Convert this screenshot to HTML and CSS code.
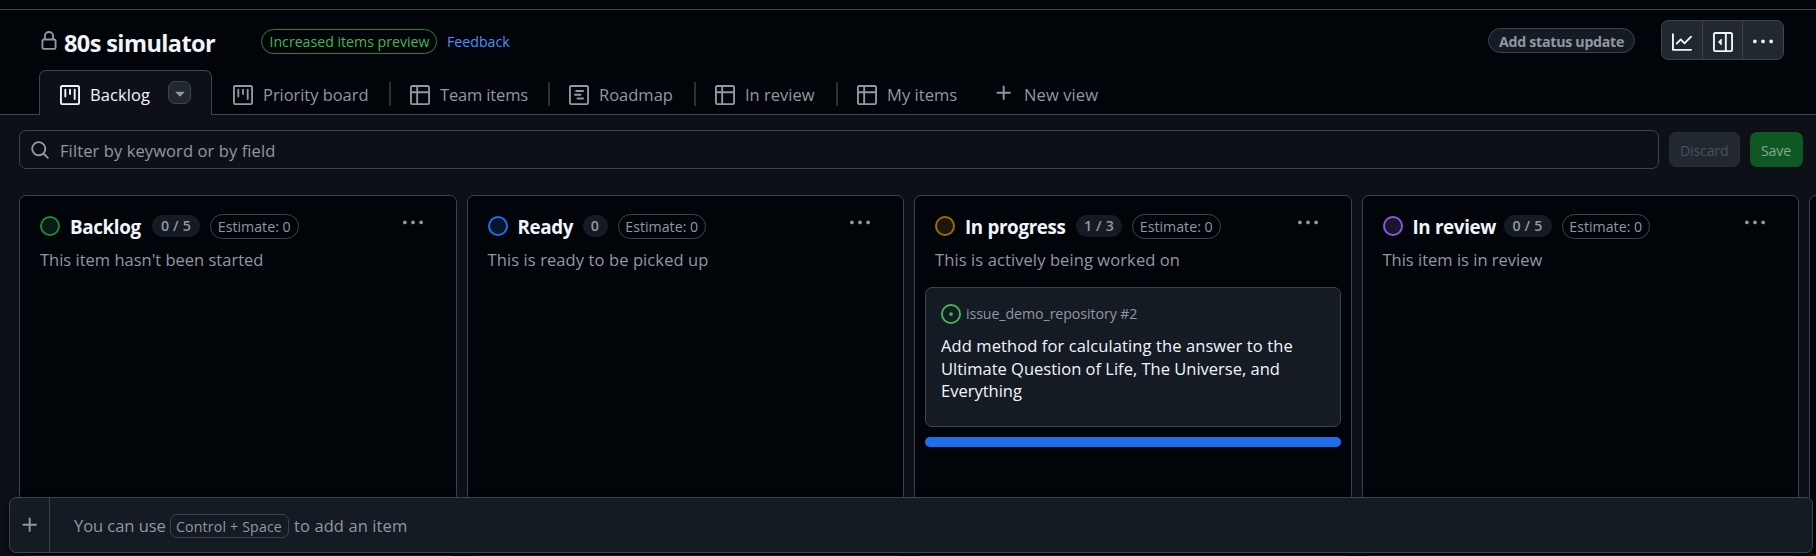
FILE: index.html
```html
<!DOCTYPE html>
<html lang="en">
<head>
<meta charset="utf-8">
<title>80s simulator</title>
<link rel="stylesheet" href="styles.css">
</head>
<body>
<svg class="defs" aria-hidden="true">
  <symbol id="board" viewBox="0 0 16 16"><path d="M1.75 0h12.5C15.216 0 16 .784 16 1.75v12.5A1.75 1.75 0 0 1 14.25 16H1.75A1.75 1.75 0 0 1 0 14.25V1.75C0 .784.784 0 1.75 0ZM1.5 1.75v12.5c0 .138.112.25.25.25h12.5a.25.25 0 0 0 .25-.25V1.75a.25.25 0 0 0-.25-.25H1.75a.25.25 0 0 0-.25.25ZM11.75 3a.75.75 0 0 1 .75.75v7.5a.75.75 0 0 1-1.5 0v-7.5a.75.75 0 0 1 .75-.75Zm-8.25.75a.75.75 0 0 1 1.5 0v5.5a.75.75 0 0 1-1.5 0ZM8 3a.75.75 0 0 1 .75.75v3.5a.75.75 0 0 1-1.5 0v-3.5A.75.75 0 0 1 8 3Z"/></symbol>
  <symbol id="table" viewBox="0 0 16 16"><path d="M0 1.75C0 .784.784 0 1.75 0h12.5C15.216 0 16 .784 16 1.75v12.5A1.75 1.75 0 0 1 14.25 16H1.75A1.75 1.75 0 0 1 0 14.25ZM6.5 6.5v8h7.75a.25.25 0 0 0 .25-.25V6.5Zm8-1.5V1.75a.25.25 0 0 0-.25-.25H6.5V5Zm-13 1.5v7.75c0 .138.112.25.25.25H5v-8ZM5 5V1.5H1.75a.25.25 0 0 0-.25.25V5Z"/></symbol>
  <symbol id="roadmap" viewBox="0 0 16 16"><path d="M4.75 7a.75.75 0 0 0 0 1.5h4.5a.75.75 0 0 0 0-1.5h-4.5ZM5 4.75A.75.75 0 0 1 5.75 4h5.5a.75.75 0 0 1 0 1.5h-5.5A.75.75 0 0 1 5 4.75ZM6.75 10a.75.75 0 0 0 0 1.5h4.5a.75.75 0 0 0 0-1.5h-4.5Z"/><path d="M0 1.75C0 .784.784 0 1.75 0h12.5C15.216 0 16 .784 16 1.75v12.5A1.75 1.75 0 0 1 14.25 16H1.75A1.75 1.75 0 0 1 0 14.25Zm1.75-.25a.25.25 0 0 0-.25.25v12.5c0 .138.112.25.25.25h12.5a.25.25 0 0 0 .25-.25V1.75a.25.25 0 0 0-.25-.25Z"/></symbol>
  <symbol id="plus" viewBox="0 0 16 16"><path d="M7.75 2a.75.75 0 0 1 .75.75V7h4.25a.75.75 0 0 1 0 1.5H8.5v4.25a.75.75 0 0 1-1.5 0V8.5H2.75a.75.75 0 0 1 0-1.5H7V2.75A.75.75 0 0 1 7.75 2Z"/></symbol>
  <symbol id="dots" viewBox="0 0 16 16"><path d="M8 9a1.5 1.5 0 1 0 0-3 1.5 1.5 0 0 0 0 3ZM1.5 9a1.5 1.5 0 1 0 0-3 1.5 1.5 0 0 0 0 3Zm13 0a1.5 1.5 0 1 0 0-3 1.5 1.5 0 0 0 0 3Z"/></symbol>
  <symbol id="lock" viewBox="0 0 16 16"><path d="M4 4a4 4 0 0 1 8 0v2h.25c.966 0 1.75.784 1.75 1.75v5.5A1.75 1.75 0 0 1 12.25 15h-8.5A1.75 1.75 0 0 1 2 13.25v-5.5C2 6.784 2.784 6 3.75 6H4Zm8.25 3.5h-8.5a.25.25 0 0 0-.25.25v5.5c0 .138.112.25.25.25h8.5a.25.25 0 0 0 .25-.25v-5.5a.25.25 0 0 0-.25-.25ZM10.5 6V4a2.5 2.5 0 1 0-5 0v2Z"/></symbol>
  <symbol id="search" viewBox="0 0 16 16"><path d="M10.68 11.74a6 6 0 0 1-7.922-8.982 6 6 0 0 1 8.982 7.922l3.04 3.04a.749.749 0 1 1-1.06 1.06ZM11.5 7a4.499 4.499 0 1 0-8.997 0A4.499 4.499 0 0 0 11.5 7Z"/></symbol>
  <symbol id="graph" viewBox="0 0 16 16"><path d="M1.5 1.75V13.5h13.75a.75.75 0 0 1 0 1.5H.75a.75.75 0 0 1-.75-.75V1.75a.75.75 0 0 1 1.5 0Zm14.28 2.53-5.25 5.25a.75.75 0 0 1-1.06 0L7 7.06 4.28 9.78a.751.751 0 0 1-1.06-1.06l3.25-3.25a.75.75 0 0 1 1.06 0L10 7.94l4.72-4.72a.751.751 0 0 1 1.06 1.06Z"/></symbol>
  <symbol id="sidebar" viewBox="0 0 16 16"><path d="m4.177 7.823 2.396-2.396A.25.25 0 0 1 7 5.604v4.792a.25.25 0 0 1-.427.177L4.177 8.177a.25.25 0 0 1 0-.354Z"/><path d="M0 1.75C0 .784.784 0 1.75 0h12.5C15.216 0 16 .784 16 1.75v12.5A1.75 1.75 0 0 1 14.25 16H1.75A1.75 1.75 0 0 1 0 14.25Zm1.75-.25a.25.25 0 0 0-.25.25v12.5c0 .138.112.25.25.25H9.5v-13Zm12.5 13a.25.25 0 0 0 .25-.25V1.75a.25.25 0 0 0-.25-.25H11v13Z"/></symbol>
  <symbol id="issue" viewBox="0 0 16 16"><path d="M8 9.5a1.5 1.5 0 1 0 0-3 1.5 1.5 0 0 0 0 3Z"/><path d="M8 0a8 8 0 1 1 0 16A8 8 0 0 1 8 0ZM1.5 8a6.5 6.5 0 1 0 13 0 6.5 6.5 0 0 0-13 0Z"/></symbol>
  <symbol id="caret" viewBox="0 0 16 16"><path d="m4.427 7.427 3.396 3.396a.25.25 0 0 0 .354 0l3.396-3.396A.25.25 0 0 0 11.396 7H4.604a.25.25 0 0 0-.177.427Z"/></symbol>
</svg>

<header class="header">
  <svg class="icon lock"><use href="#lock"/></svg>
  <h1 class="title">80s simulator</h1>
  <span class="preview">Increased items preview</span>
  <a class="feedback">Feedback</a>
  <span class="status">Add status update</span>
  <div class="actions">
    <span class="action"><svg class="icon"><use href="#graph"/></svg></span>
    <span class="action"><svg class="icon"><use href="#sidebar"/></svg></span>
    <span class="action"><svg class="icon"><use href="#dots"/></svg></span>
  </div>
</header>

<nav class="tabs">
  <div class="tab active"><svg class="icon"><use href="#board"/></svg><span class="t-backlog">Backlog</span><span class="drop"><svg class="icon"><use href="#caret"/></svg></span></div>
  <div class="tab"><svg class="icon"><use href="#board"/></svg><span class="t-priority">Priority board</span></div>
  <div class="tab split"><svg class="icon"><use href="#table"/></svg><span class="t-team">Team items</span></div>
  <div class="tab split"><svg class="icon"><use href="#roadmap"/></svg><span class="t-roadmap">Roadmap</span></div>
  <div class="tab split"><svg class="icon"><use href="#table"/></svg><span class="t-inreview">In review</span></div>
  <div class="tab split"><svg class="icon"><use href="#table"/></svg><span class="t-my">My items</span></div>
  <div class="tab new"><svg class="icon"><use href="#plus"/></svg><span class="t-new">New view</span></div>
</nav>

<div class="filter">
  <div class="field"><svg class="icon search"><use href="#search"/></svg><span class="t-filter">Filter by keyword or by field</span></div>
  <span class="btn discard">Discard</span>
  <span class="btn save">Save</span>
</div>

<main class="board">
  <section class="column">
    <div class="head"><span class="dot green"></span><h2 class="name n-backlog">Backlog</h2><span class="count c5">0 / 5</span><span class="estimate">Estimate: 0</span><svg class="icon more"><use href="#dots"/></svg></div>
    <p class="desc">This item hasn't been started</p>
  </section>
  <section class="column">
    <div class="head"><span class="dot blue"></span><h2 class="name n-ready">Ready</h2><span class="count c0">0</span><span class="estimate">Estimate: 0</span><svg class="icon more"><use href="#dots"/></svg></div>
    <p class="desc wide">This is ready to be picked up</p>
  </section>
  <section class="column">
    <div class="head"><span class="dot amber"></span><h2 class="name n-progress">In progress</h2><span class="count c3">1 / 3</span><span class="estimate">Estimate: 0</span><svg class="icon more"><use href="#dots"/></svg></div>
    <p class="desc wide">This is actively being worked on</p>
    <article class="card">
      <div class="repo"><svg class="icon"><use href="#issue"/></svg><span class="t-repo">issue_demo_repository #2</span></div>
      <p class="card-title"><span class="wide">Add method for calculating the answer to the</span><br>Ultimate Question of Life, The Universe, and<br>Everything</p>
    </article>
    <div class="drop-bar"></div>
  </section>
  <section class="column">
    <div class="head"><span class="dot purple"></span><h2 class="name n-review">In review</h2><span class="count c5">0 / 5</span><span class="estimate">Estimate: 0</span><svg class="icon more"><use href="#dots"/></svg></div>
    <p class="desc">This item is in review</p>
  </section>
  <section class="column"></section>
</main>

<footer class="omnibar">
  <span class="add"><svg class="icon"><use href="#plus"/></svg></span>
  <span class="hint"><span class="t-you">You can use</span><kbd class="key">Control + Space</kbd><span class="t-to">to add an item</span></span>
</footer>
</body>
</html>
```
FILE: styles.css
```css
* { box-sizing: border-box; }
body {
  margin: 0;
  width: 1816px;
  height: 556px;
  overflow: hidden;
  position: relative;
  display: flex;
  flex-direction: column;
  background: #0d1117;
  color: #9198a1;
  font: 16.5px/24px "Open Sans", "Noto Sans", sans-serif;
  white-space: nowrap;
}
h1, h2, p { margin: 0; }
.defs { display: none; }
.icon { width: 20px; height: 20px; fill: currentColor; flex: none; display: block; }

.header {
  height: 70px;
  flex: none;
  display: flex;
  align-items: flex-start;
  background: #010409;
  padding-left: 39px;
  box-shadow: inset 0 9px #010409, inset 0 10px #3d444d;
}
.lock { margin: 31px 5px 0 0; }
.title { width: 197px; margin-top: 27px; font-size: 23.5px; line-height: 32px; font-weight: 700; letter-spacing: -0.6px; color: #f0f6fc; }
.preview { width: 176px; height: 25px; margin-top: 29px; border: 1px solid #238636; border-radius: 13px; color: #3fb950; font-size: 14.2px; line-height: 24px; padding-left: 7.5px; letter-spacing: -0.02px; }
.feedback { margin: 30px 0 0 10px; color: #4493f8; font-size: 14.2px; line-height: 24px; }
.status { width: 147px; height: 25px; margin: 28px 26px 0 auto; border: 1px solid #3d444d; border-radius: 13px; background: #151b23; font-size: 14.2px; font-weight: 700; letter-spacing: -0.28px; line-height: 25px; padding-left: 10px; }
.actions { display: flex; width: 123px; height: 40px; margin: 20px 32px 0 0; border: 1px solid #3d444d; border-radius: 7px; background: #212830; color: #f0f6fc; overflow: hidden; }
.action { flex: 1; display: flex; align-items: center; justify-content: center; padding-top: 4px; }
.action + .action { border-left: 1px solid #3d444d; }

.tabs { height: 45px; flex: none; display: flex; background: #010409; padding-left: 39px; box-shadow: inset 0 -1px #3d444d; }
.tab { display: flex; align-items: center; padding: 4px 0 0 21px; gap: 10px; }
.active { width: 173px; padding: 4px 0 0 20px; border: 1px solid #3d444d; border-bottom: 0; border-radius: 7px 7px 0 0; background: #0d1117; color: #f0f6fc; }
.drop { width: 23px; height: 23px; display: flex; align-items: center; justify-content: center; margin: -5px 20px 0 auto; border: 1px solid #3d444d; border-radius: 7px; background: #212830; color: #9198a1; }
.tab span { flex: none; }
.split::before { content: ""; width: 2px; height: 24px; background: #2a3038; margin: -2px 9px 0 -21px; }
.new .icon { margin-top: -4px; }
.t-backlog { width: 66px; letter-spacing: 0.1px; }
.t-priority { width: 126px; letter-spacing: -0.05px; }
.t-team { width: 108px; letter-spacing: -0.15px; }
.t-roadmap { width: 95px; }
.t-inreview { width: 91px; }
.t-my { width: 86px; letter-spacing: 0.05px; }
.t-new { letter-spacing: 0.1px; }

.filter { display: flex; align-items: center; height: 69px; flex: none; padding: 0 13px 0 19px; margin-bottom: 11px; }
.field { display: flex; align-items: center; width: 1640px; height: 39px; border: 1px solid #3d444d; border-radius: 7px; padding-left: 10px; gap: 10px; margin-right: 10px; }
.t-filter { padding-top: 2px; letter-spacing: 0.1px; }
.btn { height: 35px; border-radius: 7px; font-size: 14.2px; line-height: 37px; padding-left: 12px; letter-spacing: -0.2px; }
.discard { width: 71px; margin-right: 10px; background: #212830; color: #4a515a; border: 1px solid #262c36; line-height: 35px; padding-left: 10px; }
.save { width: 53px; background: #105823; color: #84a98d; padding-left: 11px; }

.board { display: flex; gap: 10px; width: 1816px; overflow: hidden; padding-left: 19px; height: 361px; flex: none; }
.column { width: 437.5px; flex: none; border: 1px solid #3d444d; border-radius: 7px; background: #010409; padding: 0 10px; }
.head { display: flex; align-items: center; height: 44px; padding: 0 10px; margin-top: 8px; }
.dot { width: 20px; height: 20px; border-radius: 50%; border: 2px solid; margin-right: 10px; flex: none; }
.green { border-color: #238636; background: #0a1b12; }
.blue { border-color: #1f6feb; background: #08162b; }
.amber { border-color: #9e6a03; background: #1d160b; }
.purple { border-color: #8957e5; background: #1b152b; }
.name { font-size: 18.8px; font-weight: 700; letter-spacing: -0.35px; line-height: 28px; padding-top: 1px; color: #f0f6fc; }
.count { height: 22px; border-radius: 11px; background: #151b23; font-size: 14.2px; font-weight: 600; line-height: 22px; letter-spacing: 0.2px; text-align: center; margin-right: 10px; }
.c5 { width: 48px; }
.c3 { width: 46px; }
.c0 { width: 25px; }
.n-backlog { width: 82px; }
.n-ready { width: 65px; }
.n-progress { width: 111px; }
.n-review { width: 91px; }
.estimate { width: 88.5px; height: 25px; border: 1px solid #3d444d; border-radius: 13px; font-size: 14.2px; line-height: 24px; text-align: center; }
.more { margin: -6px 13px 0 auto; }
.desc { padding-left: 10px; }
.wide { letter-spacing: 0.1px; }
.card { height: 140px; margin-top: 15px; border: 1px solid #3d444d; border-radius: 7px; background: #151b23; padding: 16px 15px; }
.repo { display: flex; align-items: center; height: 20px; gap: 5px; font-size: 14.2px; }
.t-repo { letter-spacing: -0.08px; }
.repo .icon { color: #3fb950; }
.card-title { margin-top: 11px; line-height: 22.5px; color: #f0f6fc; }
.drop-bar { height: 10px; margin-top: 10px; border-radius: 5px; background: #1f6feb; }

.omnibar { position: absolute; left: 9px; top: 497px; width: 1804px; height: 56px; display: flex; border: 1px solid #3d444d; border-radius: 7px; background: #151b23; box-shadow: 0 4px 8px #010409; }
.add { width: 40px; display: flex; align-items: center; justify-content: center; border-right: 1px solid #3d444d; }
.hint { display: flex; align-items: center; padding: 2px 0 0 24px; }
.t-you { width: 96px; letter-spacing: -0.05px; }
.t-to { letter-spacing: 0.1px; }
.key { width: 119px; height: 24px; border: 1px solid #3d444d; border-radius: 7px; margin-right: 5px; padding-left: 5px; font: 14.2px/23px "Open Sans", sans-serif; letter-spacing: 0.15px; }
```
